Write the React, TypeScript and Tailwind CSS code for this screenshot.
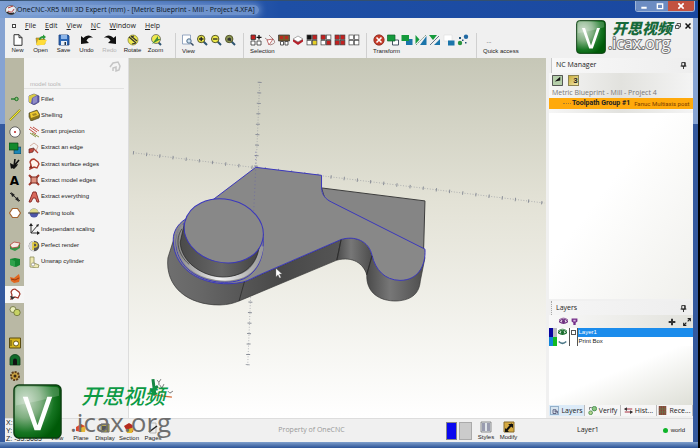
import { ReactNode } from 'react'
import clsx from 'clsx'

interface Item {
  label: string
  icon: ReactNode
}

function Icon({ children, className = 'size-3' }: { children: ReactNode; className?: string }) {
  return (
    <svg viewBox="0 0 12 12" className={clsx('shrink-0', className)} aria-hidden="true">
      {children}
    </svg>
  )
}

const magnifier = (mark: ReactNode, lens = '#f0ec4a') => (
  <Icon>
    <path d="M7.5 7.5 11 11" stroke="#2e5572" strokeWidth="2" />
    <circle cx="5.2" cy="5" r="3.7" fill={lens} stroke="#55562c" />
    {mark}
  </Icon>
)

const squares = (fills: string[]) => (
  <Icon>
    {fills.map((fill, i) => (
      <rect
        key={i}
        x={i % 2 ? 6.5 : 1}
        y={i > 1 ? 6.5 : 1}
        width="4.4"
        height="4.4"
        fill={fill}
        stroke="#444"
        strokeWidth="0.7"
      />
    ))}
  </Icon>
)

const fileTools: Item[] = [
  {
    label: 'New',
    icon: (
      <Icon>
        <path d="M2 .7h5l3 3v7.6H2z" fill="#fff" stroke="#333" />
        <path d="M7 .7v3h3" fill="none" stroke="#333" />
      </Icon>
    ),
  },
  {
    label: 'Open',
    icon: (
      <Icon>
        <path d="M1 4h4l1 1h4v5l-8 1z" fill="#d9a51c" stroke="#8c7a22" strokeWidth=".6" />
        <path d="M1 11 3 6h9l-3 5z" fill="#ffdc3a" />
        <path d="M4 6c0-3 2-4 4-4V.5L11 3 8 5.5V4C6 4 5.500 5 5.500 6z" fill="#2b9a3c" />
      </Icon>
    ),
  },
  {
    label: 'Save',
    icon: (
      <Icon>
        <path d="M1 1h9l1 1v9H1z" fill="#2b67b6" stroke="#173e7c" strokeWidth=".8" />
        <path d="M3 1h6v4H3z" fill="#8db5e8" />
        <path d="M3 7h6v4H3z" fill="#e8eef6" />
        <path d="M6.500 8H8v3H6.500z" fill="#234" />
      </Icon>
    ),
  },
  {
    label: 'Undo',
    icon: (
      <Icon>
        <path d="M0 10V2l2.500 2C5 .5 10 .5 12 4 9 3 7 4 5.500 6.500L8 9z" fill="#111" />
      </Icon>
    ),
  },
  {
    label: 'Redo',
    icon: (
      <Icon>
        <path d="M12 10V2L9.500 4C7 .5 2 .5 0 4c3-1 5 0 6.500 2.500L4 9z" fill="#111" />
      </Icon>
    ),
  },
  {
    label: 'Rotate',
    icon: (
      <Icon>
        <circle cx="6" cy="6" r="5" fill="#eee94e" stroke="#807d2e" strokeWidth=".7" />
        <path d="M2 3 9 9M4 2l6 5M7 2l-3 1M5 10l4-1" stroke="#333" strokeWidth="1.200" />
      </Icon>
    ),
  },
  {
    label: 'Zoom',
    icon: (
      <Icon>
        <path d="m8 8 3 3" stroke="#2e5572" strokeWidth="2" />
        <circle cx="6" cy="5" r="4.500" fill="#eee94e" stroke="#666" strokeWidth=".8" />
        <path d="M2 10 8 2v3h3z" fill="#3f8d3c" />
      </Icon>
    ),
  },
]

const viewIcons = [
  <Icon>
    <path d="M.5 1h8v9h-8z" fill="#fff" stroke="#7d93b2" strokeWidth=".8" />
    <circle cx="7" cy="7" r="2.200" fill="#cfe0ef" stroke="#496986" />
    <path d="m9 9 2.500 2.500" stroke="#394f66" strokeWidth="1.500" />
  </Icon>,
  magnifier(<path d="M3 5h4.500M5.200 2.800v4.500" stroke="#222" strokeWidth="1.300" />),
  magnifier(<path d="M3 5h4.500" stroke="#222" strokeWidth="1.300" />),
  magnifier(<path d="M3.500 6.500v-2l2-1 1.500 1v2.500z" fill="#333" />, '#8b9652'),
]

const R = '#c3201f'
const W = '#fff'

const selectionIcons = [
  <Icon>
    <path d="M1 1h4.500v4.500H1z" fill={R} stroke="#333" strokeWidth=".8" />
    <path d="M1 7h4v4H1zM7 7h4v4H7z" fill={W} stroke="#333" strokeWidth=".8" />
    <path d="M6.500 3.300h5M9 1v4.600" stroke="#111" strokeWidth="1.300" />
  </Icon>,
  <Icon>
    <path d="m5 1 5 5q2 3-1 4L6 11M1 4l5 4" fill="none" stroke="#a98a88" strokeWidth="1" />
    <path d="m3 6 6-1-4 6z" fill={W} stroke="#a33" strokeWidth=".7" />
  </Icon>,
  <Icon>
    <path d="M.5 1h11v6H.5z" fill="#7a5a2c" stroke="#333" strokeWidth=".7" />
    <path d="M2 2h3v3H2zM7 2h3v3H7z" fill="#b72c1f" />
    <path d="M2.500 7.500h3v3.500h-3zM7 7.500h3V11H7z" fill={W} stroke="#333" strokeWidth=".8" />
  </Icon>,
  <Icon>
    <path d="m6 3 5 2.500v2L6 11 1 7.500v-2z" fill="#b5202a" />
    <path d="m6 2 5 3-5 3-5-3z" fill={W} stroke="#777" strokeWidth=".6" />
  </Icon>,
  squares(['#111', R, W, '#e6cf24']),
  squares([R, W, W, R]),
  squares([R, R, R, R]),
  squares([W, W, W, W]),
]

const GREEN = '#159a3c'
const BLUE = '#1b75aa'

const transformIcons = [
  <Icon>
    <circle cx="6" cy="6" r="5.200" fill="#c63b28" stroke="#7c2118" strokeWidth=".7" />
    <path d="m3.500 3.500 5 5m0-5-5 5" stroke="#fff" strokeWidth="1.600" />
  </Icon>,
  <Icon>
    <path d="M5.500 6h6v5h-6z" fill={W} stroke="#345" strokeWidth=".9" />
    <path d="M.5 1H8v6H.5z" fill={GREEN} stroke="#13632b" strokeWidth=".7" />
  </Icon>,
  <Icon>
    <path d="M5 5h6.500v6H5z" fill={BLUE} />
    <path d="M.5 1H8v6H.5z" fill={GREEN} />
  </Icon>,
  <Icon>
    <path d="M.5 1v9l4-4.500z" fill={GREEN} />
    <path d="M11.500 2v9H5z" fill={BLUE} />
    <path d="m1 11 10-10" stroke="#59806a" strokeWidth=".8" strokeDasharray="2 1" />
  </Icon>,
  <Icon>
    <path d="M0 1h8L4 6z" fill={GREEN} />
    <path d="M11 5v6H5z" fill={BLUE} />
    <path d="m1 11 9-9" stroke="#678" fill="none" />
  </Icon>,
  <Icon>
    <path d="M1 1h8v6H1z" fill="#fff" stroke="#ddd" strokeWidth=".6" />
    <path d="M5 6.500h6.500v5H5z" fill={BLUE} />
  </Icon>,
  <Icon>
    <circle cx="9" cy="2.700" r="2.200" fill="#2169a3" />
    <circle cx="3" cy="9" r="2.200" fill="#29933e" />
    <path d="M2 3h2v2H2zM8 8h1.500v1.500H8zM5 5.500h1.500V7H5z" fill="#257" />
  </Icon>,
]

const modelTools: Item[] = [
  {
    label: 'Fillet',
    icon: (
      <Icon>
        <path d="m6 1 5 2v6l-5 3-5-3V3z" fill="#6663b5" stroke="#353260" strokeWidth=".6" />
        <path d="m1 3 5-2 3 1-5 3-1 5-2-1z" fill="#d9cb45" />
        <path d="m5 5 4-2v6l-4 2z" fill="#8f8cc4" />
      </Icon>
    ),
  },
  {
    label: 'Shelling',
    icon: (
      <Icon>
        <path d="m1 4 8-3 3 5-1 3-8 3-2-4z" fill="#8b751e" stroke="#45401f" strokeWidth=".6" />
        <path d="m2 4 7-2 2 4-8 3z" fill="#efcb32" />
        <path d="m4 5 4-1 1 2-4 1z" fill="#a58a25" />
      </Icon>
    ),
  },
  {
    label: 'Smart projection',
    icon: (
      <Icon>
        <path d="m2 1 7 5M1 3l7 5M5 1l6 4" stroke="#c65347" />
        <path d="m4 7 7 4M2 7l6 4" stroke="#8c9440" />
      </Icon>
    ),
  },
  {
    label: 'Extract an edge',
    icon: (
      <Icon>
        <path d="m2 4 4-3 4 3-2 5" fill="none" stroke="#d5b3a5" />
        <path d="m1 7 5-1-1 4-4 1z" fill="#c44a3e" stroke="#5e2420" strokeWidth=".7" />
        <path d="m6 7 4 4" stroke="#b5443a" strokeWidth="1.300" />
      </Icon>
    ),
  },
  {
    label: 'Extract surface edges',
    icon: (
      <Icon>
        <path d="M2 4q1-3 4-3l4 3 1 2-2 4-3-1-4 2 1-4z" fill="#fff4ec" stroke="#b04030" strokeWidth="1.400" />
        <path d="m1 10 2-3 2 3z" fill="#8c2c22" />
      </Icon>
    ),
  },
  {
    label: 'Extract model edges',
    icon: (
      <Icon>
        <path d="m1 1 10 10M11 1 1 11" stroke="#a33a2c" strokeWidth="2" />
        <path d="M3 3h6v6H3z" fill="#df9280" stroke="#7d2b22" />
      </Icon>
    ),
  },
  {
    label: 'Extract everything',
    icon: (
      <Icon>
        <path d="M1 11 5 1h3l3 10H9L7.500 7H5l-2 4z" fill="#d8695c" stroke="#8d2f2b" />
      </Icon>
    ),
  },
  {
    label: 'Parting tools',
    icon: (
      <Icon>
        <circle cx="6" cy="6" r="4.500" fill="#4d56a8" />
        <path d="M1.500 6a4.500 4.500 0 0 1 9 0z" fill="#ddd88a" />
        <path d="M0 6h12" stroke="#444" strokeWidth="1.100" />
      </Icon>
    ),
  },
  {
    label: 'Independant scaling',
    icon: (
      <Icon>
        <path d="M3 2v8h8M3 10l7-8" stroke="#333" fill="none" />
        <path d="m3 0 2 3H1zM12 10l-3-2v4zM11 1 8 2l2 2z" fill="#222" />
      </Icon>
    ),
  },
  {
    label: 'Perfect render',
    icon: (
      <Icon>
        <circle cx="6" cy="6" r="5.300" fill="#555" />
        <path d="M6 .8a5.200 5.200 0 0 0 0 10.400z" fill="#d8d8d8" />
        <path d="M5 10V3h2a2 2 0 0 1 0 4H5" fill="none" stroke="#dfc52d" strokeWidth="1.500" />
      </Icon>
    ),
  },
  {
    label: 'Unwrap cylinder',
    icon: (
      <Icon>
        <path d="M2 1h4v6l5 2-1 3-8-1z" fill="#efe9b1" stroke="#8a8a58" strokeWidth=".8" />
        <circle cx="5" cy="8.500" r="1.600" fill="#fff" stroke="#777" strokeWidth=".6" />
      </Icon>
    ),
  },
]

// Null entries leave an empty slot between icon groups
const railIcons: (Item | null)[] = [
  {
    label: 'Point',
    icon: (
      <Icon>
        <path d="M2 6h4" stroke="#267d2b" strokeWidth="1.400" />
        <circle cx="7.500" cy="6" r="1.700" fill="#88c77a" stroke="#1e6e24" />
      </Icon>
    ),
  },
  {
    label: 'Line',
    icon: (
      <Icon>
        <path d="M1 11 11 1" stroke="#4b4a20" strokeWidth="2" />
        <path d="M1 11 11 1" stroke="#f4ec2e" strokeWidth="1.200" />
      </Icon>
    ),
  },
  {
    label: 'Circle',
    icon: (
      <Icon>
        <circle cx="6" cy="6" r="5.200" fill="#fff" stroke="#444" strokeWidth=".8" />
        <circle cx="6" cy="6" r="1" fill="#b22" />
      </Icon>
    ),
  },
  {
    label: 'Transform',
    icon: (
      <Icon>
        <path d="M5 5h7v7H5z" fill="#1c86b6" stroke="#134" strokeWidth=".6" />
        <path d="M0 1h9v7H0z" fill="#128a2c" stroke="#0a4316" strokeWidth=".7" />
      </Icon>
    ),
  },
  {
    label: 'Trim',
    icon: (
      <Icon>
        <path d="m5 8 1-7M5 8l5-6" stroke="#111" strokeWidth="1.600" />
        <path d="m1 5 4 2 4-1-1 2-3 3-2-1-1 1z" fill="#111" />
      </Icon>
    ),
  },
  {
    label: 'Text',
    icon: <span className="font-['DejaVu_Sans',sans-serif] text-[12px] leading-3 font-bold text-black">A</span>,
  },
  {
    label: 'Dimension',
    icon: (
      <Icon>
        <path d="m1 2 10 8" stroke="#222" />
        <path d="m2 1 4 3-3 2zM10 11 6 8l3-2z" fill="#222" />
      </Icon>
    ),
  },
  {
    label: 'Polygon',
    icon: (
      <Icon>
        <path d="M3.500 1.500h5L11.500 6l-3 4.500h-5L.5 6z" fill="#fff" stroke="#a3622f" strokeWidth="1.200" />
      </Icon>
    ),
  },
  null,
  {
    label: 'Surface',
    icon: (
      <Icon>
        <path d="m1 6 3-3 7 1v4l-5 3-5-2z" fill="#339646" />
        <path d="m1 5 4-3 6 1-2 4-6 1z" fill="#f6ebe7" stroke="#b24137" strokeWidth=".8" />
      </Icon>
    ),
  },
  {
    label: 'Solid',
    icon: (
      <Icon>
        <path d="m1 3 5-1 5 1v6l-4 2-6-2z" fill="#148732" />
        <path d="m1 3 5 2v6l-5-2z" fill="#30a24c" />
      </Icon>
    ),
  },
  {
    label: 'Sheet',
    icon: (
      <Icon>
        <path d="m1 5 4 1 5-4 1 4-1 4-5 1-3-2z" fill="#e2671f" />
        <path d="m2 7 4 1 4-2" stroke="#93380f" fill="none" />
      </Icon>
    ),
  },
  {
    label: 'Model tools',
    icon: (
      <Icon>
        <path d="M2 4q1-3 4-3l4 3 1 2-2 4-3-1-4 2 1-4z" fill="#fff" stroke="#a13528" strokeWidth="1.200" />
        <path d="m1 8 2 4 3-3z" fill="#333" />
      </Icon>
    ),
  },
  {
    label: 'Combine',
    icon: (
      <Icon>
        <circle cx="4" cy="4.500" r="3" fill="#e9edbb" stroke="#666c35" strokeWidth=".8" />
        <circle cx="8" cy="7.500" r="3.200" fill="#c7d265" stroke="#666c35" strokeWidth=".8" />
      </Icon>
    ),
  },
  null,
  {
    label: 'Pocket',
    icon: (
      <Icon>
        <path d="M.5 1h11v10H.5z" fill="#d3b21f" stroke="#5b4d10" />
        <circle cx="7" cy="6.500" r="2.500" fill="#fff" stroke="#6b5a16" />
        <path d="M2 3v6" stroke="#5b4d10" />
      </Icon>
    ),
  },
  {
    label: 'Profile',
    icon: (
      <Icon>
        <path d="M1 11V5a5 4.500 0 0 1 10 0v6z" fill="#126b2a" stroke="#0b3c17" strokeWidth=".8" />
        <path d="M4 11V6.500a2 2 0 0 1 4 0V11z" fill="#111" />
      </Icon>
    ),
  },
  {
    label: 'Drill',
    icon: (
      <Icon>
        <circle cx="6" cy="6" r="4" fill="#caa343" stroke="#5d3d1c" strokeWidth="2" strokeDasharray="2 1" />
        <circle cx="6" cy="6" r="1.500" fill="#3d2813" />
      </Icon>
    ),
  },
]

const statusTools: Item[] = [
  { label: 'View', icon: <Icon><path d="M2 3h8v7H2z" fill="#ddd" /></Icon> },
  { label: 'Plane', icon: <Icon><path d="m1 5 5-3 4 2-3 6-6-1z" fill="#d94b2b" /><path d="m5 6 6-2-1 6H4z" fill="#e8b63a" /></Icon> },
  { label: 'Display', icon: <Icon><path d="M2 2h8v8H2z" fill="#d8c23c" stroke="#666" /><path d="M3 4h5v4H3z" fill="#555" /></Icon> },
  { label: 'Section', icon: <Icon><path d="m1 4 5-3 5 3-1 6-5 1z" fill="#b52b20" /><path d="m3 8 8-3-2 6H4z" fill="#e0b62f" /></Icon> },
  { label: 'Pages', icon: <Icon><path d="M3 1h6v10H3z" fill="#eee" stroke="#999" strokeWidth=".6" /><path d="m2 10 8-6" stroke="#222" strokeWidth="1.500" /></Icon> },
]

const dockTabs: Item[] = [
  {
    label: 'Layers',
    icon: (
      <Icon className="size-[9px]">
        <path d="M.5.5h11v11H.5z" fill="#d7e4ef" stroke="#6f93b4" />
        <path d="M4 5h4v5H4zM6 7h4v3" fill="none" stroke="#446" />
      </Icon>
    ),
  },
  {
    label: 'Verify',
    icon: (
      <Icon className="size-[9px]">
        <circle cx="8.500" cy="3.500" r="3" fill="#8cc483" stroke="#33803a" />
        <circle cx="3.500" cy="9" r="2.500" fill="#b8d48f" stroke="#33803a" />
        <path d="M2 5V2h3" fill="none" stroke="#555" />
      </Icon>
    ),
  },
  {
    label: 'Hist...',
    icon: (
      <Icon className="size-[9px]">
        <path d="M1 4h10M1 8h10" stroke="#a52a3a" strokeWidth="1.300" />
        <path d="m0 4 4-2.500v5zM12 8 8 5.500v5z" fill="#333" />
      </Icon>
    ),
  },
  {
    label: 'Rece...',
    icon: (
      <Icon className="size-[9px]">
        <path d="M1 0h10v12H1z" fill="#8f4038" />
        <path d="M3 0v12M6 0v12M9 0v12M1 4h10M1 8h10" stroke="#6a7a4c" />
      </Icon>
    ),
  },
]

function ToolGroup({ label, icons, className }: { label: string; icons: ReactNode[]; className?: string }) {
  return (
    <div className={clsx('flex flex-col border-l border-[#d0d0d0] pt-px pl-[6px]', className)}>
      <div className="flex gap-[2px]">
        {icons.map((icon, i) => (
          <button key={i} type="button" aria-label={`${label} ${i + 1}`} className="size-3">
            {icon}
          </button>
        ))}
      </div>
      <span className="pt-px text-[6px] leading-[8px]">{label}</span>
    </div>
  )
}

function LogoBadge({ className }: { className?: string }) {
  return (
    <svg viewBox="0 0 50 56" preserveAspectRatio="none" className={className} aria-hidden="true">
      <defs>
        <radialGradient id="badge" cx=".25" cy=".3" r=".8">
          <stop offset="0" stopColor="#c3d8c2" />
          <stop offset=".4" stopColor="#7fae80" />
          <stop offset=".75" stopColor="#167522" />
          <stop offset="1" stopColor="#005a08" />
        </radialGradient>
      </defs>
      <rect x="1" y="1" width="48" height="54" rx="5" fill="url(#badge)" stroke="#0c3d12" strokeWidth="1.500" />
      <path d="M3 6q0-3 3-3h38q3 0 3 3v6Q25 18 3 22z" fill="#fff" opacity=".2" />
      <path d="M10 13h5l10 29 10-29h5L28 47h-6z" fill="#fff" />
    </svg>
  )
}

function Pin() {
  return (
    <Icon className="size-[7px]">
      <path d="M3 1h6v6H3zM1 7h10M6 7v5M8 1v6" fill="none" stroke="#222" strokeWidth="1.500" />
    </Icon>
  )
}

function Eye({ color }: { color: string }) {
  return (
    <Icon className="size-[9px]">
      <path d="M0 6q6-6 12 0-6 5-12 0z" fill="#fff" stroke={color} strokeWidth="1.500" />
      <circle cx="6" cy="6" r="2.300" fill={color} />
      <path d="M0 4q6-5 12 0" fill="none" stroke={color} />
    </Icon>
  )
}

function Viewport() {
  return (
    <svg
      viewBox="129 58 418 361"
      preserveAspectRatio="xMidYMid slice"
      className="size-full"
      role="img"
      aria-label="3D model"
    >
      <defs>
        <linearGradient id="side" x1="0" x2="1">
          <stop offset="0" stopColor="#6f6f6f" />
          <stop offset=".2" stopColor="#666" />
          <stop offset=".45" stopColor="#555" />
          <stop offset=".65" stopColor="#484848" />
          <stop offset="1" stopColor="#555" />
        </linearGradient>
        <linearGradient id="lobe" x1="0" x2="1">
          <stop offset="0" stopColor="#4a4a4a" />
          <stop offset=".4" stopColor="#777" />
          <stop offset="1" stopColor="#4c4c4c" />
        </linearGradient>
        <linearGradient id="boss" x1="0" x2="1">
          <stop offset="0" stopColor="#4a4a4a" />
          <stop offset=".5" stopColor="#666" />
          <stop offset="1" stopColor="#3e3e3e" />
        </linearGradient>
        <linearGradient id="groove" x1="0" x2="1">
          <stop offset="0" stopColor="#888" />
          <stop offset=".5" stopColor="#f4f4f4" />
          <stop offset="1" stopColor="#999" />
        </linearGradient>
      </defs>

      {/* Axes */}
      <g fill="none" stroke="#8b8f98">
        <path d="M133 153 546 203.500" strokeWidth="1" strokeDasharray="1 1.700" opacity=".6" />
        <path d="M133 153 546 203.500" strokeWidth="3.500" strokeDasharray="1 12.300" />
        <path d="M260 82 248 366" strokeWidth="1" strokeDasharray="1 1.700" opacity=".6" />
        <path d="M260 82 248 366" strokeWidth="4" strokeDasharray="1 9.500" />
      </g>

      <g transform="translate(150 150) scale(.33333)" strokeWidth="3" strokeLinejoin="round">
        <path d="M516 115 827 154 823 300 640 240 530 160z" fill="#858585" stroke="#3c3c3c" />
        <path
          d="M74 262 54 325C45 410 110 467 210 467 235 466 250 462 268 455L562 332 575 270 284 397z"
          fill="url(#side)"
          stroke="#333"
          strokeWidth="2"
        />
        <path
          d="M575 270 562 332C610 320 642 342 652 376L668 320C655 270 612 258 575 270z"
          fill="url(#lobe)"
          stroke="#333"
          strokeWidth="2"
        />
        <path
          d="M668 315 652 376C650 430 690 456 742 455 790 452 810 430 813 395L827 325 780 390z"
          fill="url(#lobe)"
          stroke="#333"
          strokeWidth="2"
        />
        <path
          d="M318 53 516 77V115C517 135 527 148 545 157L827 299C830 350 805 393 752 393 705 392 678 360 668 318 658 273 615 258 575 270L330 376C310 385 298 393 280 398 175 420 70 370 70 270 70 248 82 225 105 210L190 150z"
          fill="#888"
          stroke="#3a37bd"
        />
        <path d="M284 397 268 455M575 270 562 332M668 320 652 376" fill="none" stroke="#222" strokeWidth="2" />

        {/* Groove round the boss */}
        <path d="M104 220C72 248 68 305 105 350 145 395 225 412 282 388 325 368 345 320 340 262" fill="none" stroke="#3a37bd" />
        <path d="M101 228C72 262 82 320 122 353 165 388 232 397 280 378 312 363 330 335 336 290" fill="none" stroke="url(#groove)" strokeWidth="12" />
        <path d="M96 238C74 272 84 315 118 345" fill="none" stroke="#333" strokeWidth="2" />
        <path
          d="M103 225 91 278C93 335 155 382 220 383 280 382 318 348 327 300L341 255z"
          fill="url(#boss)"
          stroke="#222"
          strokeWidth="2"
        />
        <ellipse cx="222" cy="244" rx="120" ry="95" transform="rotate(13 222 244)" fill="#888" stroke="#3a37bd" />
        <path d="M318 60 312 185M318 53V0" stroke="#6664a8" strokeWidth="2" strokeDasharray="3 8" />
        <path d="M379 357v25l6-6 5 10 4-2-5-10h8z" fill="#fff" stroke="#777" strokeWidth="1" />
      </g>

      {/* Axis triad */}
      <g fill="none" strokeWidth="1.500">
        <path d="m153 380 2 16-3-5 6-4" stroke="#168643" strokeWidth="3" />
        <path d="m155 396 17 2" stroke="#d46a35" />
        <path d="m157 381 2 2 2-3m-2 3v3M160 386l2 3 2-4m4 7 2 2 3-2" stroke="#777" strokeWidth="1" />
      </g>
    </svg>
  )
}

export default function App() {
  return (
    <div className="relative flex h-screen min-h-[448px] flex-col overflow-hidden border-r-2 border-black bg-[#315796] font-['Liberation_Sans',Arial,sans-serif] text-[6px] text-[#222]">
      <header className="flex h-[18px] shrink-0 items-center border-t border-[#34506e] bg-linear-to-r from-[#7d9fd2] via-[#1e4fa5] via-40% to-[#1a48a0] pl-[5px]">
        <Icon>
          <ellipse cx="6" cy="6" rx="5.500" ry="4.500" fill="#f3f3f3" stroke="#555" strokeWidth=".8" />
          <path d="M3 7q4 3 6-2M3 4l5-2" fill="none" stroke="#b33" />
          <path d="M2 8q3 3 7 1" fill="none" stroke="#222" strokeWidth="1.500" />
        </Icon>
        <h1 className="rounded-full bg-[#86a7d9]/70 pr-1 font-['Open_Sans',sans-serif] text-[7px] leading-[10px] whitespace-nowrap text-[#0b1420] shadow-[0_0_6px_2px_#86a7d999]">
          OneCNC-XR5 Mill 3D Expert (mm) - [Metric Blueprint - Mill - Project 4.XFA]
        </h1>
        <div className="mr-[3px] mb-[6px] ml-auto flex h-[11px] overflow-hidden rounded-b-[3px] border border-t-0 border-[#9fb5d8] text-white">
          <button type="button" aria-label="Minimize" className="flex w-4 items-center justify-center bg-[#6c8cc2]">
            <Icon className="size-2"><path d="M2 7h8v3H2z" fill="#fff" /></Icon>
          </button>
          <button type="button" aria-label="Maximize" className="flex w-4 items-center justify-center bg-[#6c8cc2]">
            <Icon className="size-2"><path d="M2 3h8v7H2z" fill="none" stroke="#fff" strokeWidth="2" /></Icon>
          </button>
          <button type="button" aria-label="Close" className="flex w-[26px] items-center justify-center bg-[#c3523f]">
            <Icon className="size-2"><path d="m2 2 8 8m0-8-8 8" stroke="#fff" strokeWidth="2.500" /></Icon>
          </button>
        </div>
      </header>

      <div className="flex min-h-0 flex-1 flex-col bg-linear-to-b from-[#86a3d2] from-25% to-[#34599e] to-25% px-[5px]">
        <nav className="flex h-[15px] shrink-0 items-center gap-[9px] bg-[#f0f0f0] pl-[7px] font-['Open_Sans',sans-serif] text-[7px] leading-[10px]">
          <span className="size-1 border border-[#444] bg-white" />
          {['File', 'Edit', 'View', 'NC', 'Window', 'Help'].map(name => (
            <a key={name} href="#" className="first-letter:underline">
              {name}
            </a>
          ))}
          <div className="mr-[2px] ml-auto flex gap-1">
            <button type="button" aria-label="Restore document">
              <Icon className="size-[6px]"><path d="M1 5h7v6H1zM4 5V1h7v7H8" fill="none" stroke="#222" strokeWidth="1.500" /></Icon>
            </button>
            <button type="button" aria-label="Close document">
              <Icon className="size-[6px]"><path d="m1 1 10 10m0-10L1 11" stroke="#111" strokeWidth="3" /></Icon>
            </button>
          </div>
        </nav>

        <div className="flex h-[25px] shrink-0 bg-[#f0f0f0]">
          <div className="flex w-[170px] pt-px pl-px">
            {fileTools.map(({ label, icon }) => (
              <button
                key={label}
                type="button"
                className={clsx('flex w-[23px] flex-col items-center text-[6px] leading-[8px]', label === 'Redo' && 'text-[#b5b5b5]')}
              >
                {icon}
                {label}
              </button>
            ))}
          </div>
          <ToolGroup label="View" icons={viewIcons} className="w-[68px]" />
          <ToolGroup label="Selection" icons={selectionIcons} className="w-[123px]" />
          <ToolGroup label="Transform" icons={transformIcons} className="w-[110px]" />
          <ToolGroup label="Quick access" icons={[<span className="block leading-[14px]">...</span>]} />
        </div>

        <main className="flex min-h-0 flex-1">
          <nav className="w-[19px] shrink-0 bg-[#b9b8a4] pt-[33px]">
            <div className="grid h-[293px] auto-rows-fr">
              {railIcons.map((item, i) =>
                item ? (
                  <button
                    key={i}
                    type="button"
                    aria-label={item.label}
                    className={clsx('flex items-center justify-center', item.label === 'Model tools' && 'bg-[#f6f6f6]')}
                  >
                    {item.icon}
                  </button>
                ) : (
                  <span key={i} />
                )
              )}
            </div>
          </nav>

          <aside className="w-[105px] shrink-0 border-r border-[#dcdcdc] bg-[#f4f4f4]">
            <div className="flex justify-end pt-[2px] pr-[7px]">
              <Icon><path d="m1 7 3-4 5-1 2 4-1 4-3 1V7L4 8v3" fill="none" stroke="#c5c5c5" strokeWidth="1.500" /></Icon>
            </div>
            <h2 className="mr-1 h-[17px] border-b border-[#e2e2e2] pt-2 pl-[6px] leading-[8px] text-[#b5b5b5]">model tools</h2>
            <ul className="mt-[2px] grid h-[179px] auto-rows-fr pl-[4px]">
              {modelTools.map(({ label, icon }) => (
                <li key={label} className="flex">
                  <button type="button" className="flex items-center gap-px whitespace-nowrap">
                    {icon}
                    {label}
                  </button>
                </li>
              ))}
            </ul>
          </aside>

          <section className="min-w-0 flex-1 bg-linear-to-b from-[#c6c7b7] via-[#e3e2d6] via-40% to-white">
            <Viewport />
          </section>

          <aside className="flex w-[147px] shrink-0 flex-col bg-[#f0f0f0] pl-[3px]">
            <h2 className="mx-[2px] flex h-[15px] items-center justify-between border-l border-[#c8c8c8] bg-linear-to-r from-[#f8f8f8] to-[#eee] px-1 font-['Open_Sans',sans-serif] text-[7px]">
              NC Manager
              <Pin />
            </h2>
            <div className="bg-linear-to-r from-[#f6f6f6] via-[#e2e2de] to-[#f4f4f4] pt-[2px]">
              <div className="flex gap-[5px] pl-[3px]">
                <button type="button" aria-label="Post">
                  <Icon className="size-[11px]">
                    <path d="M.5.5h11v11H.5z" fill="#b5cfaa" stroke="#444" />
                    <path d="m3 7 6-5v4z" fill="#111" />
                  </Icon>
                </button>
                <button type="button" aria-label="Three axis" className="size-[11px] border border-[#8b8352] bg-linear-to-br from-[#c8ad35] to-[#f2e8aa] pl-1 text-[8px] leading-[10px] font-bold">
                  3
                </button>
              </div>
              <p className="pt-[2px] pl-[3px] font-['Open_Sans',sans-serif] text-[7px] leading-[10px] whitespace-nowrap text-[#777]">Metric Blueprint - Mill - Project 4</p>
              <div className="mb-1 flex h-[11px] items-center bg-[#ffa90b] pl-[14px] whitespace-nowrap">
                <span className="mr-px w-2 shrink-0 border-t border-dotted border-[#a97c2a]" />
                <span className="font-['Roboto',sans-serif] text-[7px] font-bold">Toolpath Group #1</span>
                <span className="ml-1 font-['Roboto',sans-serif] text-[6px] text-[#7c3c00]">Fanuc Multiaxis post</span>
              </div>
            </div>
            <div className="min-h-0 flex-1 bg-linear-to-br from-white from-40% to-[#f0f0ec]" />

            <h2 className="mx-[2px] mt-[2px] flex h-[14px] shrink-0 items-center justify-between border-l border-dotted border-[#aaa] bg-linear-to-r from-[#f5f5f5] to-[#eee] px-1 font-['Open_Sans',sans-serif] text-[7px]">
              Layers
              <Pin />
            </h2>
            <div className="flex h-[13px] shrink-0 items-center gap-[3px] bg-linear-to-r from-[#f8f8f8] to-[#e2e2dc] pr-[2px] pl-[10px]">
              <Eye color="#703080" />
              <Icon className="size-[7px]"><path d="M1 1h10v5L8 8v4H4V8L1 6z" fill="#76318a" /><path d="M4 3h4v3H4z" fill="#d8b4df" /></Icon>
              <button type="button" aria-label="Add layer" className="mr-1 ml-auto">
                <Icon className="size-2"><path d="M1 6h10M6 1v10" stroke="#333" strokeWidth="3" /></Icon>
              </button>
              <button type="button" aria-label="Expand">
                <Icon className="size-2"><path d="M7 1h4v4M11 1 7 5M1 7v4h4M1 11l4-4" fill="none" stroke="#222" strokeWidth="1.700" /></Icon>
              </button>
            </div>
            <table className="w-full table-fixed border-collapse bg-white text-left">
              <tbody>
                {[
                  { name: 'Layer1', swatch: 'bg-[#0804a0]', side: 'bg-[#b9bac0]', active: true },
                  { name: 'Print Box', swatch: 'bg-[#1186d8]', side: 'bg-[#12ba22]', active: false },
                ].map(layer => (
                  <tr key={layer.name} className="h-[9px]">
                    <td className={clsx('w-1 p-0', layer.swatch)} />
                    <td className={clsx('w-1 p-0', layer.side)} />
                    <td className="w-3 border-r border-[#555] p-0 pl-px">
                      {layer.active ? (
                        <Eye color="#176b2b" />
                      ) : (
                        <Icon className="size-[9px]"><path d="M1 6q5 5 10 0" fill="none" stroke="#4a7686" strokeWidth="2" /></Icon>
                      )}
                    </td>
                    <td className="w-2 border-r border-[#555] p-0">
                      {layer.active && <div className="mx-auto size-[5px] border border-[#555] bg-white" />}
                    </td>
                    <td className={clsx('p-0 pl-px text-[6px] leading-[9px]', layer.active && 'bg-[#1b8cec] text-white')}>{layer.name}</td>
                  </tr>
                ))}
              </tbody>
            </table>
            <div className="h-[59px] shrink-0 bg-linear-to-br from-white from-45% to-[#dedfd7]" />
            <div className="mb-[2px] flex h-[11px] shrink-0">
              {dockTabs.map(({ label, icon }, i) => (
                <button
                  key={label}
                  type="button"
                  className={clsx(
                    'flex flex-1 items-center justify-center gap-[2px] border-r border-[#bbb] font-["Open_Sans",sans-serif] text-[7px] leading-[10px]',
                    i === 0 ? 'bg-[#dcebf8]' : 'bg-[#f6f6f6]'
                  )}
                >
                  {icon}
                  {label}
                </button>
              ))}
            </div>
          </aside>
        </main>

        <footer className="flex h-[24px] shrink-0 items-center border-t border-[#ddd] bg-[#f0f0f0]">
          <div className="w-10 pl-px text-[7px] leading-[8px] whitespace-nowrap">
            <p>X:</p>
            <p>Y:</p>
            <p>Z: -35.5685</p>
          </div>
          <div className="flex self-end">
            {statusTools.map(({ label, icon }) => (
              <button key={label} type="button" className="flex w-6 flex-col items-center text-[6px] leading-[8px]">
                {icon}
                {label}
              </button>
            ))}
          </div>
          <p className="flex-1 pl-[12px] text-center font-['Open_Sans',sans-serif] text-[7px] text-[#999]">Property of OneCNC</p>
          <div className="flex w-[247px] shrink-0 items-center">
            <button type="button" aria-label="Line color" className="h-[18px] w-[11px] border border-[#888] bg-[#0a08ef]" />
            <button type="button" aria-label="Fill color" className="ml-[2px] h-[18px] w-[13px] border border-[#aaa] bg-[#cbcbcb]" />
            <button type="button" className="ml-[3px] flex w-[22px] flex-col items-center leading-[8px]">
              <Icon><path d="M1 1h10v10H1z" fill="#dfe4e8" stroke="#777" strokeWidth=".8" /><path d="M2 3h3M2 5h3M2 7h3M2 9h3M7 3h3M7 5h3M7 7h3M7 9h3" stroke="#557" /></Icon>
              Styles
            </button>
            <button type="button" className="flex w-[23px] flex-col items-center leading-[8px]">
              <Icon><path d="M1 1h10v10H1z" fill="#d6aa41" stroke="#866b2c" /><path d="m3 10 6-7" stroke="#111" strokeWidth="2" /><path d="M5 3h5v4zM2 7v4h4z" fill="#111" /></Icon>
              Modify
            </button>
            <span className="ml-[57px] font-['Open_Sans',sans-serif] text-[7px]">Layer1</span>
            <span className="mr-2 ml-auto flex items-center gap-[3px]">
              <span className="size-[5px] rounded-full bg-[#0eb429]" />
              world
            </span>
          </div>
        </footer>
      </div>
      <div className="h-[6px] shrink-0 bg-linear-to-b from-[#7f9fcc] to-[#2c5396]" />

      {/* Brand marks float above the window */}
      <div className="absolute top-5 right-[26px] flex items-start gap-[6px]">
        <LogoBadge className="h-[34px] w-[30px]" />
        <div className="font-['Noto_Sans_CJK_SC',sans-serif] text-[15px] leading-[16px] font-black text-[#17693a] italic">
          <p>开思视频</p>
          <p className="-ml-1 font-['Open_Sans',sans-serif] text-[16px] leading-[15px] font-normal text-[#fafafa] not-italic [-webkit-text-stroke:2px_#777] [paint-order:stroke_fill]">
            .icax.org
          </p>
        </div>
      </div>
      <div className="absolute bottom-[9px] left-[13px] flex items-end gap-2">
        <LogoBadge className="h-[55px] w-[49px]" />
        <div className="pb-[3px] font-['Noto_Sans_CJK_SC',sans-serif] text-[21px] leading-[25px] font-medium text-[#0c9a44] italic">
          <p className="pl-[11px]">开思视频</p>
          <p className="font-['Open_Sans',sans-serif] text-[26px] leading-[28px] font-medium text-[#6e6e6e] not-italic">.icax.org</p>
        </div>
      </div>
    </div>
  )
}
